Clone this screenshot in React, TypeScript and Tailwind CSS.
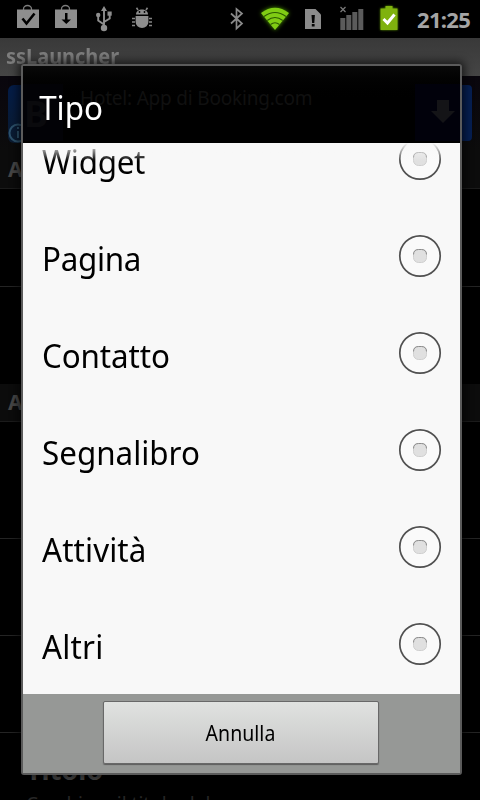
import type { ReactNode } from "react";

const OPTIONS = [
  { label: "Widget", text: "tracking-[-0.3px]" },
  { label: "Pagina", text: "tracking-[-0.3px]" },
  { label: "Contatto", text: "tracking-[-0.1px]" },
  { label: "Segnalibro", text: "tracking-normal" },
  { label: "Attività", text: "tracking-[0.1px]" },
  { label: "Altri", text: "tracking-[0.2px]" },
];

const BagIcon = ({ children }: { children: ReactNode }) => (
  <svg width="24" height="26" viewBox="0 0 24 26" fill="none">
    <path
      d="M7.500 8V7a4 3.500 0 0 1 8 0V8"
      stroke="#7c7c7c"
      strokeWidth="1.300"
    />
    <path d="M1 7.500h22V26H1z" fill="#8e8e8e" />
    {children}
  </svg>
);

const UsbIcon = () => (
  <svg width="18" height="26" viewBox="0 0 18 26" fill="none">
    <path
      d="M9 4v18M9 18.500l-5.800-4v-5M9 16l5.700-3.500V8"
      stroke="#8e8e8e"
      strokeWidth="1.900"
    />
    <path d="M9 0l3 5H6z" fill="#8e8e8e" />
    <circle cx="9" cy="22" r="3.200" fill="#8e8e8e" />
    <circle cx="3.200" cy="9" r="2.200" fill="#8e8e8e" />
    <rect x="12.500" y="5.500" width="4.200" height="4.200" fill="#8e8e8e" />
  </svg>
);

const DebugIcon = () => (
  <svg width="22" height="22" viewBox="0 0 22 22" fill="none">
    <path
      d="M7 3L5.500.8M15 3L16.500.8M4 11.500H1M4 15H1M4 18.500H1M18 11.500h3M18 15h3M18 18.500h3"
      stroke="#858585"
      strokeWidth="1.600"
    />
    <path d="M5 7.500C5 .8 17 .8 17 7.500z" fill="#8e8e8e" />
    <path d="M4.600 9h12.800v6a6.400 6 0 0 1-12.800 0z" fill="#8e8e8e" />
    <circle cx="8.500" cy="5" r=".9" fill="#000" />
    <circle cx="13.500" cy="5" r=".9" fill="#000" />
  </svg>
);

const BluetoothIcon = () => (
  <svg width="14" height="24" viewBox="0 0 14 24" fill="none">
    <path
      d="M1 6.500l11 10-5.500 5V2l5.500 4.500-11 10"
      stroke="#8a8a8a"
      strokeWidth="1.700"
    />
  </svg>
);

const WifiIcon = () => (
  <svg
    className="drop-shadow-[0_0_2px_#4d9900]"
    width="30"
    height="24"
    viewBox="0 0 30 24"
    fill="none"
  >
    <path d="M1 6Q15-4.500 29 6L15 23z" fill="#80cc14" />
    <path
      d="M4 9.500q11-8 22 0M7.200 13.500q7.800-6 15.600 0M10.500 17.500q4.500-3.500 9 0"
      stroke="#2b5a00"
      strokeWidth="1.100"
    />
  </svg>
);

const SimIcon = () => (
  <svg width="17" height="21" viewBox="0 0 17 21" fill="none">
    <path d="M0 0h10.500l5.500 5.500V20H0z" fill="#8b8b8b" />
    <path d="M6.500 6h3.400l-.6 8H7.100zM6.800 15h2.800v2.500H6.800z" fill="#050505" />
  </svg>
);

const SignalIcon = () => (
  <svg width="24" height="24" viewBox="0 0 24 24" fill="none">
    <path d="M.5 1l5 5M5.500 1l-5 5" stroke="#7b7b7b" strokeWidth="1.200" />
    <path
      d="M.3 12h5v12h-5zM6.300 9h5v15h-5zM12.300 6h5v18h-5zM18.300 3h5v21h-5z"
      fill="#5b5b5b"
    />
  </svg>
);

const BatteryIcon = () => (
  <svg
    className="drop-shadow-[0_0_1px_#5f9900]"
    width="18"
    height="25"
    viewBox="0 0 18 25"
    fill="none"
  >
    <path d="M5.500 0h7v2.500h5V24H.5V2.500h5z" fill="#7fb20e" />
    <path d="M3.500 13l4 4 7-8.500" stroke="#fff" strokeWidth="3" />
  </svg>
);

const StatusBar = () => (
  <div className="flex h-[38px] items-start bg-black">
    <div className="ml-4 mt-[2px]">
      <BagIcon>
        <path d="M6.500 16.500l4 5 8-10" stroke="#000" strokeWidth="2.600" />
      </BagIcon>
    </div>
    <div className="ml-[14px] mt-[2px]">
      <BagIcon>
        <path d="M11 11h2.500v6.500h3.500l-4.700 4.500-4.800-4.500H11z" fill="#000" />
      </BagIcon>
    </div>
    <div className="ml-[17px] mt-[6px]">
      <UsbIcon />
    </div>
    <div className="ml-[18px] mt-[7px]">
      <DebugIcon />
    </div>
    <div className="ml-[77px] mt-[7px]">
      <BluetoothIcon />
    </div>
    <div className="ml-[16px] mt-[7px]">
      <WifiIcon />
    </div>
    <div className="ml-[15px] mt-[9px]">
      <SimIcon />
    </div>
    <div className="ml-[18px] mt-[6px]">
      <SignalIcon />
    </div>
    <div className="ml-[16px] mt-[6px]">
      <BatteryIcon />
    </div>
    <span className="ml-[19px] mt-[3px] text-[22px] font-bold leading-8 tracking-[-0.7px] text-[#a5a5a5]">
      21:25
    </span>
  </div>
);

const SectionHeader = () => (
  <div className="h-[38px] shrink-0 border-b border-[#1b1b1b] bg-[#0c0c0c] pl-2 text-[21px] font-bold leading-9 text-[#464646]">
    A
  </div>
);

// dimmed settings screen that stays visible around the dialog
const Background = () => (
  <div className="flex h-[762px] flex-col overflow-hidden bg-black">
    <div className="h-[38px] shrink-0 bg-linear-to-b from-[#393939] to-[#454545] pl-[6px] text-[21px] font-bold leading-[37px] text-[#7d7d7d]">
      <span className="inline-block origin-left scale-x-[0.95]">
        ssLauncher
      </span>
    </div>
    <div className="flex h-[75px] shrink-0 items-start justify-between bg-linear-to-b from-[#09060d] to-[#0c0c0c] px-2 pt-[9px]">
      <div className="h-[58px] w-14 rounded-md bg-linear-to-b from-[#041c48] to-[#0b1b30]">
        <svg
          className="mt-[38px]"
          width="20"
          height="20"
          viewBox="0 0 20 20"
          fill="none"
        >
          <circle cx="10" cy="10" r="8.500" stroke="#2c516b" strokeWidth="2" />
          <path d="M10 8v7M10 4v2" stroke="#2c516b" strokeWidth="2" />
        </svg>
      </div>
      <div className="h-14 w-14 rounded-sm bg-[#061f52]" />
    </div>
    <SectionHeader />
    <div className="h-[98px] shrink-0 border-b border-[#242424]" />
    <div className="h-[97px] shrink-0" />
    <SectionHeader />
    <div className="h-[117px] shrink-0 border-b border-[#242424]" />
    <div className="h-[97px] shrink-0 border-b border-[#242424]" />
    <div className="h-[97px] shrink-0 border-b border-[#242424]" />
    <div className="shrink-0 pl-[26px] pt-5">
      <p className="text-[27px] font-bold leading-[34px] text-[#4a4a4a]">
        Titolo
      </p>
      <p className="mt-[5px] text-[19px] leading-6 text-[#262626]">
        Cambiare il titolo del
      </p>
    </div>
  </div>
);

const Radio = () => (
  <svg
    className="mb-1"
    width="44"
    height="44"
    viewBox="0 0 44 44"
    fill="none"
  >
    <circle
      cx="22"
      cy="22"
      r="20.200"
      fill="#fafafa"
      stroke="#505050"
      strokeWidth="1.700"
    />
    <rect
      x="15.500"
      y="15.500"
      width="13"
      height="13"
      rx="5"
      fill="#e0e0e0"
      stroke="#cfcfcf"
    />
    <path d="M15.500 20.500q0-5 5-5h3q5 0 5 5" stroke="#8c8c8c" />
  </svg>
);

const Dialog = () => (
  <div className="absolute left-[21px] top-[64px] flex h-[711px] w-[441px] flex-col rounded-[3px] border-2 border-[#5b5b5b] bg-[#f8f8f8] shadow-[0_0_8px_3px_rgba(0,0,0,0.6)]">
    <div className="relative h-[77px] shrink-0 overflow-hidden bg-linear-to-b from-[#090909] via-black to-black">
      {/* ad banner showing faintly through the title */}
      <div className="absolute left-0 top-[18px] h-[57px] w-10 bg-[#020206] pl-px text-[36px] font-bold leading-[60px] text-[#0a0a0d]">
        B
      </div>
      <div className="absolute left-[57px] top-[18px] whitespace-nowrap text-[19px] leading-7 tracking-[-0.2px] text-[#101010]">
        Hotel: App di Booking.com
      </div>
      <div className="absolute right-0 top-[18px] h-[57px] w-[45px] bg-[#01010b]">
        <svg className="ml-4 mt-4" width="24" height="24" viewBox="0 0 24 24">
          <path d="M6 0h12v11h6L12 23 0 11h6z" fill="#141417" />
        </svg>
      </div>
      <h1 className="relative origin-left scale-x-[0.95] pl-[17px] text-[33px] leading-[83px] text-white">
        Tipo
      </h1>
    </div>
    <div className="relative flex h-[551px] shrink-0 flex-col justify-end overflow-hidden">
      {OPTIONS.map((option) => (
        <div
          key={option.label}
          className="flex h-[97px] shrink-0 items-center justify-between pl-[19px] pr-[18px]"
        >
          <span
            className={`mt-[3px] origin-left scale-x-[0.95] text-[33px] leading-9 text-black ${option.text}`}
          >
            {option.label}
          </span>
          <Radio />
        </div>
      ))}
      <div className="absolute inset-x-0 top-0 h-[18px] bg-linear-to-b from-[#f8f8f8] to-[#f8f8f8]/0" />
    </div>
    <div className="flex flex-1 justify-center bg-[#969896] pr-[2px] pt-[7px]">
      <button className="h-[63px] w-[276px] rounded-[2px] border border-[#686868] bg-linear-to-b from-[#e0e2e0] to-[#c5c5c5] text-[21px] text-black shadow-[0_1px_1px_#5d5d5d]">
        <span className="relative top-px inline-block scale-x-[0.93]">
          Annulla
        </span>
      </button>
    </div>
  </div>
);

const App = () => (
  <div className="relative h-[800px] w-[480px] overflow-hidden bg-black font-['Noto_Sans',sans-serif]">
    <StatusBar />
    <Background />
    <Dialog />
  </div>
);

export default App;
